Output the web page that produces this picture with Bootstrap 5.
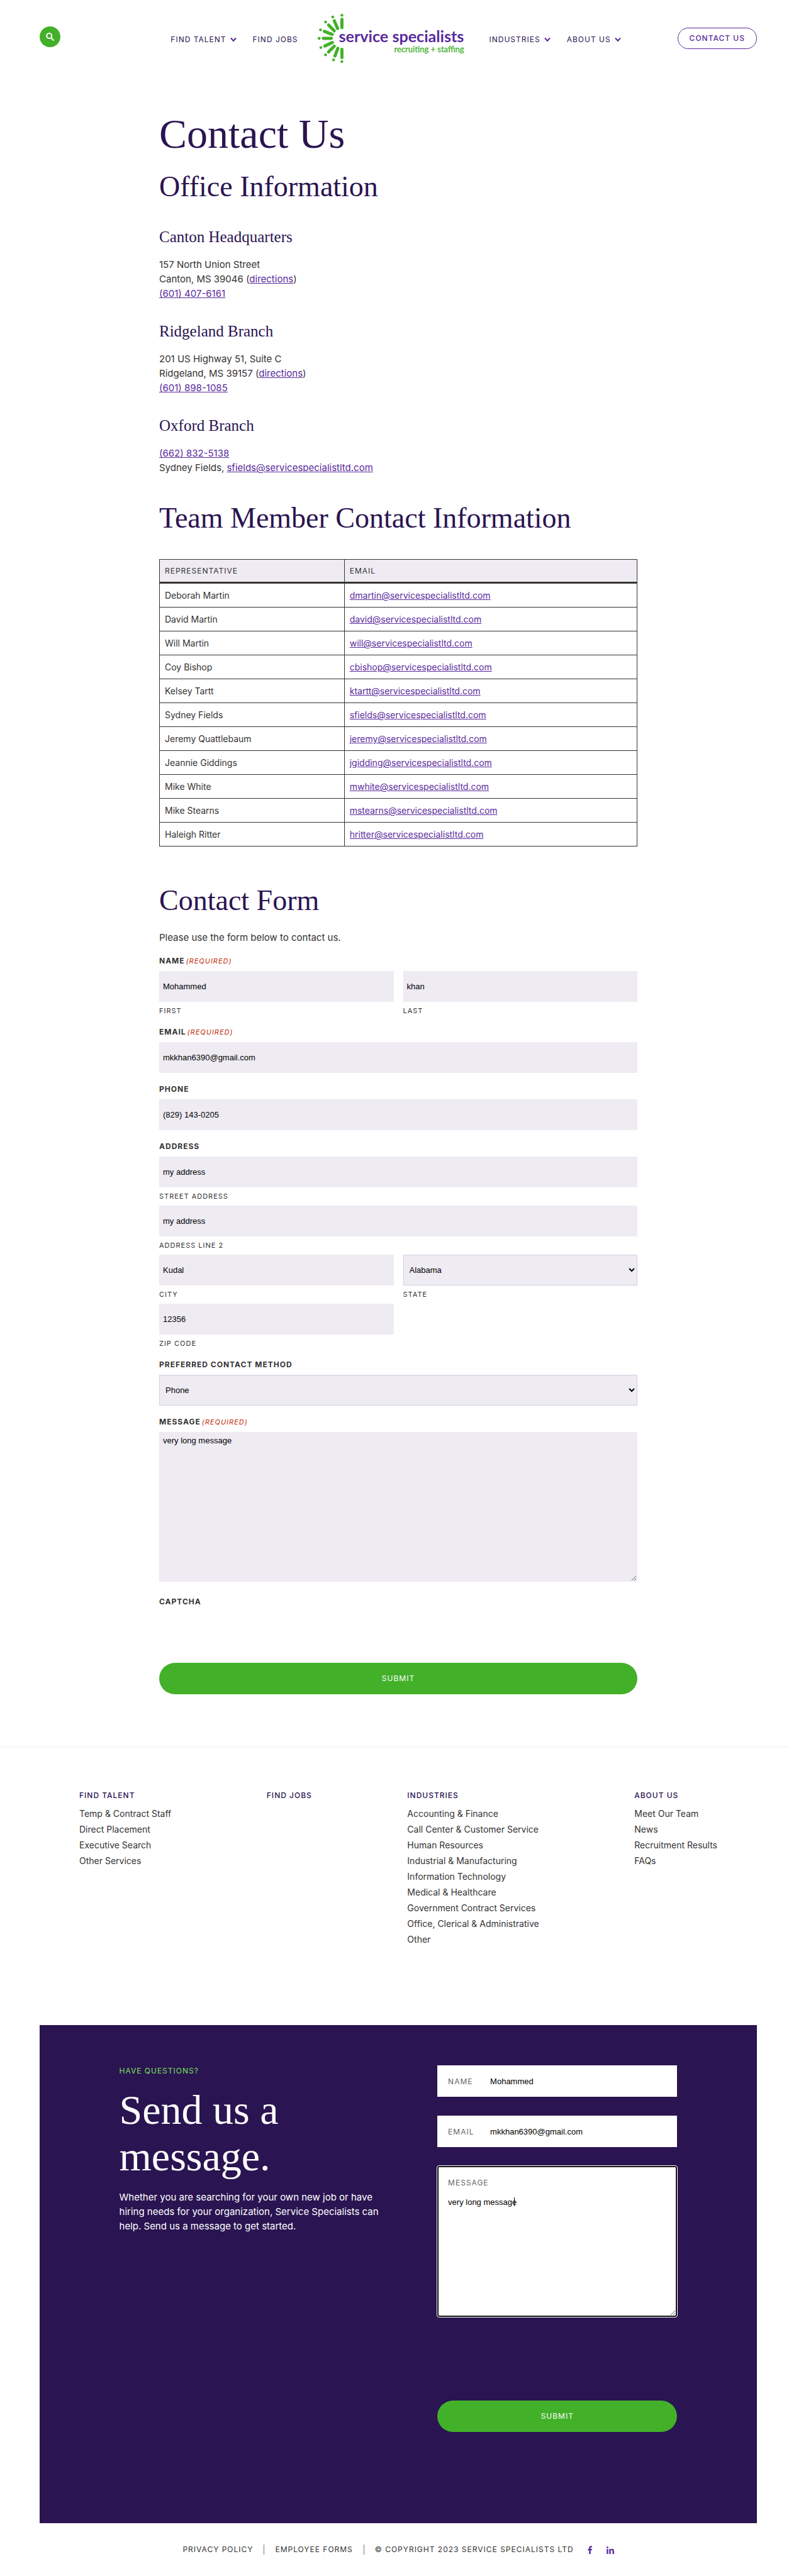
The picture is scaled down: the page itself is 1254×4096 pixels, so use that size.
<!DOCTYPE html>
<html lang="en">
<head>
<meta charset="utf-8">
<meta name="viewport" content="width=device-width, initial-scale=1">
<title>Contact Us | Service Specialists</title>
<link href="https://cdn.jsdelivr.net/npm/bootstrap@5.3.0/dist/css/bootstrap.min.css" rel="stylesheet">
<style>
  :root { --ink: #333; --navy: #2a1451; --violet: #5a2a9c; --leaf: #43b02a; --mist: #eeebf3; }
  body { font: 15px/23px Inter, "Open Sans", sans-serif; color: var(--ink); background: #fff; }
  a { color: var(--violet); }
  h1, h2, h3 { font-family: "Liberation Serif", serif; font-weight: 400; color: var(--navy); margin: 0; }
  .page-gutter { padding-left: 63px; padding-right: 51px; }

  /* header */
  .site-header { padding-top: 22px; }
  .header-side { flex: 1 1 0; }
  .find-btn { width: 33px; height: 33px; background: var(--leaf); margin-bottom: 6px; }
  .main-links { gap: 26px; padding-top: 4px; }
  .main-links a { font-size: 12px; line-height: 16px; letter-spacing: 1px; color: var(--navy); gap: 6px; }
  .brand-logo { width: 233px; margin: 0 40px 0 31px; }
  .brand-logo svg { width: 100%; height: auto; }
  .contact-btn { font-size: 12px; line-height: 16px; font-weight: 500; letter-spacing: 1px; color: var(--violet); border: 1px solid var(--violet); padding: 8px 18px; }

  /* page body */
  .title-xl { font-size: 66px; line-height: 66px; margin-bottom: 28px; }
  .title-lg { font-size: 46px; line-height: 46px; margin-bottom: 42px; }
  .title-sm { font-size: 25px; line-height: 30px; margin-bottom: 17px; }
  .main-copy { padding-top: 80px; padding-bottom: 83px; }
  .office + .office { margin-top: 34px; }
  .offices { margin-bottom: 46px; }

  .team-table { border: 1px solid var(--ink); font-size: 14px; color: var(--ink); margin-bottom: 63px; }
  .team-table > :not(caption) > * > * { border: 1px solid var(--ink); padding: 9px 8px; line-height: 19px; color: inherit; }
  .team-table thead th { background: var(--mist); font-size: 12px; line-height: 17px; font-weight: 400; letter-spacing: 1px; width: 61.3%; border-bottom-width: 3px; }
  .team-table thead th:first-child { width: 38.7%; }

  /* main form */
  .form-lead { margin-bottom: 18px; }
  .field-group { margin-bottom: 18px; border: 0; }
  .field-title { display: block; float: none; width: auto; font-size: 12px; line-height: 16px; font-weight: 700; letter-spacing: 1px; margin: 0 0 8px; }
  .must { font-size: 11px; font-weight: 400; font-style: italic; color: #c02b0a; margin-left: 2px; }
  .field-box { display: block; width: 100%; height: 49px; padding: 0 5px; border: 1px solid var(--mist); border-radius: 0; background: var(--mist); color: #000; font: 13px/15px "Liberation Sans", sans-serif; }
  select.field-box { border-color: #d3d0e0; }
  textarea.field-box { height: 238px; padding-top: 5px; }
  .sub-label { display: block; font-size: 11px; line-height: 16px; letter-spacing: 1px; margin-top: 6px; }
  .field-row { display: grid; grid-template-columns: 1fr 1fr; gap: 7px 15px; }
  .field-row .wide { grid-column: span 2; }
  .captcha-slot { padding: 6px 0 89px; }
  .captcha-slot .field-title { margin: 0; }
  .send-btn { display: block; width: 100%; height: 50px; border: 0; border-radius: 25px; background: var(--leaf); color: #fff; font-size: 12px; line-height: 16px; letter-spacing: 1px; }

  /* footer links */
  .foot-links { border-top: 1px solid #eee; padding-top: 69px; padding-bottom: 124px; }
  .inset { padding-left: 63px; padding-right: 63px; }
  .foot-links h4 { font-size: 12px; line-height: 16px; font-weight: 500; letter-spacing: 1px; color: var(--navy); margin: 0 0 8px; }
  .foot-links li { font-size: 14px; line-height: 25px; }
  .foot-links li a { color: var(--ink); text-decoration: none; }

  /* message panel */
  .ask-panel { background: var(--navy); color: #fff; padding: 64px 11.1% 145px; }
  .ask-kicker { font-size: 12px; line-height: 16px; letter-spacing: 1px; color: #78e35a; margin: 1px 0 17px; }
  .ask-title { font-size: 66px; line-height: 74px; color: #fff; margin-bottom: 16px; }
  .ask-form { flex: 0 0 43%; }
  .ask-field { height: 50px; background: #fff; margin-bottom: 30px; }
  .ask-label { font-size: 12px; line-height: 16px; letter-spacing: 1px; color: #666; }
  .ask-field .ask-label { width: 82px; padding-left: 17px; padding-top: 2px; }
  .ask-input { border: 0; background: transparent; color: #000; font: 13px/15px "Liberation Sans", sans-serif; min-width: 0; padding: 0 2px; }
  .ask-message { margin-bottom: 133px; }
  .ask-message textarea { display: block; width: 100%; height: 240px; padding: 48px 15px 8px; background: #fff; border: 2px solid #101010; border-radius: 3px; outline: 1px solid #fff; color: #000; font: 13px/15px "Liberation Sans", sans-serif; }
  .ask-message .ask-label { position: absolute; left: 17px; top: 19px; }
  .text-caret { position: absolute; left: 122px; top: 50px; width: 1px; height: 14px; background: #000; }

  .legal { padding-top: 34px; padding-bottom: 32px; font-size: 12px; line-height: 16px; letter-spacing: 1px; }
  .legal a { color: var(--ink); text-decoration: none; }
  .legal .split { border-right: 1px solid #777; padding-right: 17px; margin-right: 17px; }
  .legal .social { margin-left: 22px; line-height: 12px; }
</style>
</head>
<body>

<header class="site-header page-gutter d-flex align-items-center">
  <div class="header-side d-flex">
    <button type="button" class="find-btn btn rounded-circle p-0 border-0 d-flex align-items-center justify-content-center" aria-label="Search">
      <svg width="15" height="15" viewBox="0 0 15 15" fill="none" stroke="#fff" stroke-width="2" stroke-linecap="round"><circle cx="6.2" cy="6" r="4"/><path d="M9.3 9.3 13 13"/></svg>
    </button>
  </div>
  <nav class="d-flex align-items-center pe-2" aria-label="Main">
    <div class="main-links d-flex">
      <a href="#" class="d-flex align-items-center text-decoration-none">FIND TALENT
        <svg width="10" height="8" viewBox="0 0 10 8" fill="none" stroke="#5a2a9c" stroke-width="2"><path d="M1 1.5 5 6l4-4.5"/></svg></a>
      <a href="#" class="text-decoration-none">FIND JOBS</a>
    </div>
    <a href="#" class="brand-logo" aria-label="Service Specialists">
      <svg class="d-block" viewBox="146 80 843 284" xmlns="http://www.w3.org/2000/svg">
        <g stroke="#43b02a" stroke-width="18" stroke-linecap="round">
          <path d="M285 112V160M241 120 260 164M208 144 241 178M184 181 229 198M178 221H224M187 265 230 245M208 299 241 266M245 322 262 278M285 284V332"/>
        </g>
        <g fill="#43b02a"><circle cx="285" cy="88" r="8"/><circle cx="232" cy="98" r="8"/><circle cx="191" cy="127" r="8"/><circle cx="162" cy="172" r="8"/><circle cx="154" cy="221" r="8"/><circle cx="164" cy="274" r="8"/><circle cx="191" cy="316" r="8"/><circle cx="237" cy="345" r="8"/><circle cx="285" cy="355" r="8"/></g>
        <text x="987" y="242" text-anchor="end" font-family="Lato, sans-serif" font-weight="700" font-size="91" fill="#5a2a9c">service specialists</text>
        <text x="987" y="302" text-anchor="end" font-family="Lato, sans-serif" font-size="47" fill="#43b02a" stroke="#43b02a" stroke-width="1">recruiting + staffing</text>
      </svg>
    </a>
    <div class="main-links d-flex">
      <a href="#" class="d-flex align-items-center text-decoration-none">INDUSTRIES
        <svg width="10" height="8" viewBox="0 0 10 8" fill="none" stroke="#5a2a9c" stroke-width="2"><path d="M1 1.5 5 6l4-4.5"/></svg></a>
      <a href="#" class="d-flex align-items-center text-decoration-none">ABOUT US
        <svg width="10" height="8" viewBox="0 0 10 8" fill="none" stroke="#5a2a9c" stroke-width="2"><path d="M1 1.5 5 6l4-4.5"/></svg></a>
    </div>
  </nav>
  <div class="header-side d-flex justify-content-end">
    <a href="#" class="contact-btn rounded-pill text-decoration-none text-nowrap">CONTACT US</a>
  </div>
</header>

<div class="page-gutter">
  <div class="row g-0">
    <main class="main-copy col-8 offset-2">
      <h1 class="title-xl">Contact Us</h1>

      <section class="offices">
        <h2 class="title-lg">Office Information</h2>
        <div class="office">
          <h3 class="title-sm">Canton Headquarters</h3>
          <p class="mb-0">157 North Union Street<br>Canton, MS 39046 (<a href="#">directions</a>)<br><a href="#">(601) 407-6161</a></p>
        </div>
        <div class="office">
          <h3 class="title-sm">Ridgeland Branch</h3>
          <p class="mb-0">201 US Highway 51, Suite C<br>Ridgeland, MS 39157 (<a href="#">directions</a>)<br><a href="#">(601) 898-1085</a></p>
        </div>
        <div class="office">
          <h3 class="title-sm">Oxford Branch</h3>
          <p class="mb-0"><a href="#">(662) 832-5138</a><br>Sydney Fields, <a href="#">sfields@servicespecialistltd.com</a></p>
        </div>
      </section>

      <section>
        <h2 class="title-lg">Team Member Contact Information</h2>
        <table class="team-table table">
          <thead><tr><th scope="col">REPRESENTATIVE</th><th scope="col">EMAIL</th></tr></thead>
          <tbody>
            <tr><td>Deborah Martin</td><td><a href="#">dmartin@servicespecialistltd.com</a></td></tr>
            <tr><td>David Martin</td><td><a href="#">david@servicespecialistltd.com</a></td></tr>
            <tr><td>Will Martin</td><td><a href="#">will@servicespecialistltd.com</a></td></tr>
            <tr><td>Coy Bishop</td><td><a href="#">cbishop@servicespecialistltd.com</a></td></tr>
            <tr><td>Kelsey Tartt</td><td><a href="#">ktartt@servicespecialistltd.com</a></td></tr>
            <tr><td>Sydney Fields</td><td><a href="#">sfields@servicespecialistltd.com</a></td></tr>
            <tr><td>Jeremy Quattlebaum</td><td><a href="#">jeremy@servicespecialistltd.com</a></td></tr>
            <tr><td>Jeannie Giddings</td><td><a href="#">jgidding@servicespecialistltd.com</a></td></tr>
            <tr><td>Mike White</td><td><a href="#">mwhite@servicespecialistltd.com</a></td></tr>
            <tr><td>Mike Stearns</td><td><a href="#">mstearns@servicespecialistltd.com</a></td></tr>
            <tr><td>Haleigh Ritter</td><td><a href="#">hritter@servicespecialistltd.com</a></td></tr>
          </tbody>
        </table>
      </section>

      <section>
        <h2 class="title-lg mb-4">Contact Form</h2>
        <p class="form-lead">Please use the form below to contact us.</p>
        <form>
          <fieldset class="field-group">
            <legend class="field-title">NAME<span class="must">(REQUIRED)</span></legend>
            <div class="field-row">
              <div><input class="field-box" id="first" type="text" value="Mohammed"><label class="sub-label" for="first">FIRST</label></div>
              <div><input class="field-box" id="last" type="text" value="khan"><label class="sub-label" for="last">LAST</label></div>
            </div>
          </fieldset>
          <div class="field-group">
            <label class="field-title" for="email">EMAIL<span class="must">(REQUIRED)</span></label>
            <input class="field-box" id="email" type="email" value="mkkhan6390@gmail.com">
          </div>
          <div class="field-group">
            <label class="field-title" for="phone">PHONE</label>
            <input class="field-box" id="phone" type="tel" value="(829) 143-0205">
          </div>
          <fieldset class="field-group">
            <legend class="field-title">ADDRESS</legend>
            <div class="field-row">
              <div class="wide"><input class="field-box" id="street" type="text" value="my address"><label class="sub-label" for="street">STREET ADDRESS</label></div>
              <div class="wide"><input class="field-box" id="line2" type="text" value="my address"><label class="sub-label" for="line2">ADDRESS LINE 2</label></div>
              <div><input class="field-box" id="city" type="text" value="Kudal"><label class="sub-label" for="city">CITY</label></div>
              <div><select class="field-box" id="state"><option>Alabama</option></select><label class="sub-label" for="state">STATE</label></div>
              <div><input class="field-box" id="zip" type="text" value="12356"><label class="sub-label" for="zip">ZIP CODE</label></div>
            </div>
          </fieldset>
          <div class="field-group">
            <label class="field-title" for="method">PREFERRED CONTACT METHOD</label>
            <select class="field-box" id="method"><option>Phone</option></select>
          </div>
          <div class="field-group">
            <label class="field-title" for="message">MESSAGE<span class="must">(REQUIRED)</span></label>
            <textarea class="field-box" id="message">very long message</textarea>
          </div>
          <div class="captcha-slot"><span class="field-title">CAPTCHA</span></div>
          <button type="submit" class="send-btn">SUBMIT</button>
        </form>
      </section>
    </main>
  </div>
</div>

<footer>
  <div class="foot-links page-gutter">
    <div class="inset d-flex justify-content-between">
      <div>
        <h4>FIND TALENT</h4>
        <ul class="list-unstyled mb-0"><li><a href="#">Temp &amp; Contract Staff</a></li><li><a href="#">Direct Placement</a></li><li><a href="#">Executive Search</a></li><li><a href="#">Other Services</a></li></ul>
      </div>
      <div><h4>FIND JOBS</h4></div>
      <div>
        <h4>INDUSTRIES</h4>
        <ul class="list-unstyled mb-0"><li><a href="#">Accounting &amp; Finance</a></li><li><a href="#">Call Center &amp; Customer Service</a></li><li><a href="#">Human Resources</a></li><li><a href="#">Industrial &amp; Manufacturing</a></li><li><a href="#">Information Technology</a></li><li><a href="#">Medical &amp; Healthcare</a></li><li><a href="#">Government Contract Services</a></li><li><a href="#">Office, Clerical &amp; Administrative</a></li><li><a href="#">Other</a></li></ul>
      </div>
      <div>
        <h4>ABOUT US</h4>
        <ul class="list-unstyled mb-0"><li><a href="#">Meet Our Team</a></li><li><a href="#">News</a></li><li><a href="#">Recruitment Results</a></li><li><a href="#">FAQs</a></li></ul>
      </div>
    </div>
  </div>

  <div class="page-gutter">
    <section class="ask-panel d-flex justify-content-between">
      <div class="col-6 pe-3">
        <p class="ask-kicker">HAVE QUESTIONS?</p>
        <h2 class="ask-title">Send us a message.</h2>
        <p class="mb-0">Whether you are searching for your own new job or have hiring needs for your organization, Service Specialists can help. Send us a message to get started.</p>
      </div>
      <form class="ask-form">
        <div class="ask-field d-flex align-items-center">
          <label class="ask-label" for="ask-name">NAME</label>
          <input class="ask-input flex-fill" id="ask-name" type="text" value="Mohammed">
        </div>
        <div class="ask-field d-flex align-items-center">
          <label class="ask-label" for="ask-email">EMAIL</label>
          <input class="ask-input flex-fill" id="ask-email" type="email" value="mkkhan6390@gmail.com">
        </div>
        <div class="ask-message position-relative">
          <label class="ask-label" for="ask-text">MESSAGE</label>
          <textarea id="ask-text">very long message</textarea>
          <span class="text-caret"></span>
        </div>
        <button type="submit" class="send-btn">SUBMIT</button>
      </form>
    </section>

    <div class="legal d-flex justify-content-center align-items-center">
      <a class="split" href="#">PRIVACY POLICY</a>
      <a class="split" href="#">EMPLOYEE FORMS</a>
      <span>© COPYRIGHT 2023 SERVICE SPECIALISTS LTD</span>
      <a class="social" href="#" aria-label="Facebook"><svg width="8" height="13" viewBox="0 0 8 13" fill="#5a2a9c"><path d="M2.2 13V7.2H.3V5h1.900V3.300C2.200 1.200 3.400.2 5.200.2c.9 0 1.600.1 1.900.1v2.100H5.800C4.900 2.400 4.700 2.900 4.700 3.500V5H7L6.700 7.200h-2V13z"/></svg></a>
      <a class="social" href="#" aria-label="LinkedIn"><svg width="12" height="12" viewBox="0 0 12 12" fill="#5a2a9c"><circle cx="1.5" cy="1.5" r="1.4"/><path d="M.3 4h2.400v8H.3zM4.300 4h2.300v1.100C7 4.400 7.800 3.800 9 3.800c2.400 0 2.900 1.500 2.900 3.700V12H9.500V8c0-1 0-2.200-1.300-2.200S6.700 6.800 6.700 8v4H4.300z"/></svg></a>
    </div>
  </div>
</footer>

<script src="https://cdn.jsdelivr.net/npm/bootstrap@5.3.0/dist/js/bootstrap.bundle.min.js"></script>
</body>
</html>
